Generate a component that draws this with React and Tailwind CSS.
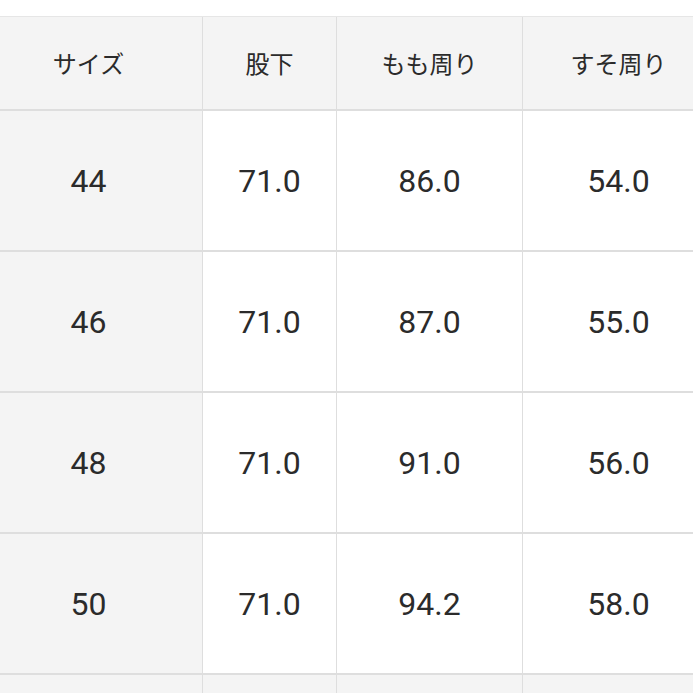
const headers = ['サイズ', '股下', 'もも周り', 'すそ周り'];

const rows = [
  ['44', '71.0', '86.0', '54.0'],
  ['46', '71.0', '87.0', '55.0'],
  ['48', '71.0', '91.0', '56.0'],
  ['50', '71.0', '94.2', '58.0'],
];

export default function App() {
  return (
    <div className="w-[693px] h-[693px] overflow-hidden bg-white pt-4 text-[#2b2b2b] font-['Roboto','Noto_Sans_CJK_JP',sans-serif]">
      <div className="-ml-[25px] w-[740px] grid grid-cols-[228px_134px_186px_192px] border-t border-[#e6e6e6]">
        {/* Header */}
        {headers.map((h) => (
          <div
            key={h}
            className="h-[94px] flex items-center justify-center bg-[#f4f4f4] border-r border-b-2 border-[#dedede] text-[24px] font-['Noto_Sans_CJK_JP',sans-serif]"
          >
            {h}
          </div>
        ))}

        {/* Body */}
        {rows.map((row, i) =>
          row.map((cell, j) => (
            <div
              key={`${i}-${j}`}
              className={`h-[141px] flex items-center justify-center border-r border-b-2 border-[#dedede] text-[32px] ${
                j === 0 ? 'bg-[#f4f4f4]' : 'bg-white'
              }`}
            >
              {cell}
            </div>
          ))
        )}

        {/* next row, cut off */}
        {headers.map((h) => (
          <div key={`x-${h}`} className="h-[60px] bg-[#f4f4f4] border-r border-[#dedede]" />
        ))}
      </div>
    </div>
  );
}
